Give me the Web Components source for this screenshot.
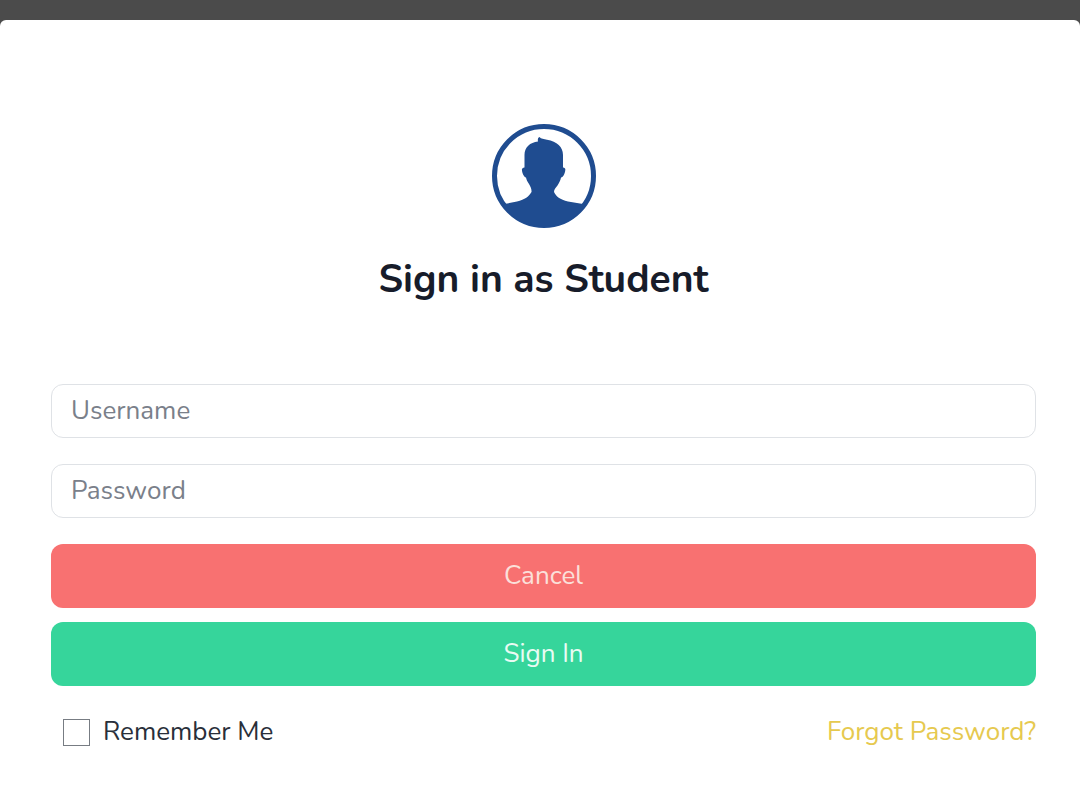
<!DOCTYPE html>
<html lang="en">
<head>
<meta charset="utf-8">
<meta name="viewport" content="width=device-width, initial-scale=1">
<title>Sign in as Student</title>
<style>
  body { margin: 0; background: #4b4b4b; font-family: Nunito, Lato, sans-serif; font-size: 26px; line-height: 36px; color: #292f3a; }
</style>
</head>
<body>
<sign-in-dialog>
  <user-avatar slot="icon"></user-avatar>
  <span slot="title">Sign in as Student</span>
  <text-field label="Username" type="text"></text-field>
  <text-field label="Password" type="password"></text-field>
  <action-button tone="danger">Cancel</action-button>
  <action-button tone="success">Sign In</action-button>
  <check-option slot="footer">Remember Me</check-option>
  <text-link slot="footer" href="#forgot">Forgot Password?</text-link>
</sign-in-dialog>

<script>
  const define = (name, html, setup) => customElements.define(name, class extends HTMLElement {
    connectedCallback() {
      if (this.shadowRoot) return;
      const root = this.attachShadow({ mode: 'open' });
      root.innerHTML = html;
      if (setup) setup(this, root);
    }
  });

  define('user-avatar', `
    <style>
      :host { display: block; width: 104px; height: 104px; }
      svg { display: block; width: 100%; height: 100%; }
    </style>
    <svg viewBox="0 0 104 104" aria-hidden="true">
      <circle cx="52" cy="52" r="49.5" fill="none" stroke="#1f4c90" stroke-width="5"/>
      <path fill="#1f4c90" d="M10 80.5 L25 77.5 C33 75.500 37 72.500 39.500 68 C39.800 65 38.500 62.500 37 60 C35 57 34.500 55.500 34 53.500 C31.500 53 29.500 47 30 45 C30.500 43.700 32.500 43.500 32.500 43.500 L32.500 31 C32.500 23 38 18.500 46 17.500 C45.500 15.500 46 13.500 47.500 13 C49 15 52 15 55 15.800 C65 17.500 71 23 71 31 L71 43.500 C71 43.500 73 43.700 73.300 45 C73.500 47 72 53 69 53.500 C68.500 56 67.500 58.500 65.500 61.500 C63.500 64 62 65.500 62 68 C64 72.500 68 75.500 76 77.500 L94 80.500 C84 95 70 102 52 102 C34 102 20 95 10 80.500 Z"/>
    </svg>`);

  define('text-field', `
    <style>
      :host { display: block; margin-bottom: 26px; }
      input { display: block; box-sizing: border-box; width: 100%; height: 54px; margin: 0; padding: 0 19px 2px;
        border: 1px solid #dfe2e6; border-radius: 12px; background: #fff; color: #1f2937; font: inherit; }
      input::placeholder { color: #7a808a; opacity: 1; }
    </style>
    <input>`, (host, root) => {
      const input = root.querySelector('input');
      input.type = host.getAttribute('type');
      input.placeholder = host.getAttribute('label');
      input.setAttribute('aria-label', host.getAttribute('label'));
    });

  define('action-button', `
    <style>
      :host { display: block; margin-bottom: 14px; }
      button { display: block; width: 100%; height: 64px; margin: 0; padding: 0; border: 0; border-radius: 12px;
        background: #36d59b; color: #e9fbf3; font: inherit; cursor: pointer; }
      :host([tone="danger"]) button { background: #f87171; color: #fbe0da; }
    </style>
    <button type="button"><slot></slot></button>`);

  define('check-option', `
    <style>
      :host { display: block; }
      label { display: flex; align-items: center; gap: 13px; }
      input { appearance: none; width: 27px; height: 27px; margin: 0; border: 1px solid #777c83; background: #fff; }
      input:checked { background: #1f4c90; }
    </style>
    <label><input type="checkbox"><slot></slot></label>`);

  define('text-link', `
    <style>
      :host { display: block; }
      a { color: #e6c94f; text-decoration: none; }
    </style>
    <a><slot></slot></a>`, (host, root) => {
      root.querySelector('a').href = host.getAttribute('href');
    });

  define('sign-in-dialog', `
    <style>
      :host { display: block; padding-top: 20px; }
      section { box-sizing: border-box; min-height: calc(100vh - 20px); padding: 104px 44px 36px 51px;
        border-radius: 6px 6px 0 0; background: #fff; }
      header { display: flex; flex-direction: column; align-items: center; gap: 28px; margin-bottom: 80px; }
      h1 { margin: 0; font-size: 39px; line-height: 48px; font-weight: 700; color: #171c2a; }
      footer { display: flex; justify-content: space-between; align-items: center; padding: 14px 0 0 12px; }
    </style>
    <section>
      <header><slot name="icon"></slot><h1><slot name="title"></slot></h1></header>
      <form><slot></slot></form>
      <footer><slot name="footer"></slot></footer>
    </section>`);
</script>
</body>
</html>
